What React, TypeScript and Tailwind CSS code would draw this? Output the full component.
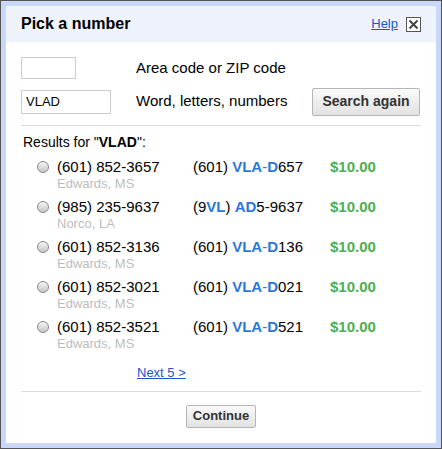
import React from "react";

const results = [
  { phone: "(601) 852-3657", place: "Edwards, MS", vanity: [["(601) ", false], ["VLA", true], ["-", "dash"], ["D", true], ["657", false]] },
  { phone: "(985) 235-9637", place: "Norco, LA", vanity: [["(9", false], ["VL", true], [") ", false], ["AD", true], ["5-9637", false]] },
  { phone: "(601) 852-3136", place: "Edwards, MS", vanity: [["(601) ", false], ["VLA", true], ["-", "dash"], ["D", true], ["136", false]] },
  { phone: "(601) 852-3021", place: "Edwards, MS", vanity: [["(601) ", false], ["VLA", true], ["-", "dash"], ["D", true], ["021", false]] },
  { phone: "(601) 852-3521", place: "Edwards, MS", vanity: [["(601) ", false], ["VLA", true], ["-", "dash"], ["D", true], ["521", false]] },
] as const;

const Radio = () => (
  <span className="mt-[3px] block h-[12px] w-[12px] shrink-0 rounded-full border border-[#8a8a8a] bg-gradient-to-b from-[#f4f4f4] to-[#c8c8c8]" />
);

const GrayButton = ({ children, className }: { children: React.ReactNode; className: string }) => (
  <button className={`rounded-[2px] border border-[#b5b5b5] bg-gradient-to-b from-[#fafafa] to-[#e2e2e2] font-bold text-[#333] ${className}`}>
    {children}
  </button>
);

export default function App() {
  return (
    <div className="h-[449px] w-[442px] border border-[#555] bg-[#c9d7fa] p-[5px] font-['Liberation_Sans',Arial,sans-serif]">
      <div className="flex h-full flex-col bg-white">
        {/* header */}
        <div className="flex h-[36px] items-center bg-[#eef2fb] pl-[15px] pr-[15px]">
          <span className="text-[16px] font-bold text-black">Pick a number</span>
          <a href="#" className="ml-auto mr-[8px] text-[13px] text-[#1a55cc] underline">
            Help
          </a>
          <span className="flex h-[15px] w-[15px] items-center justify-center border border-[#555] bg-white">
            <svg width="11" height="11" viewBox="0 0 11 11">
              <path d="M1.5 1.5 L9.5 9.5 M9.5 1.5 L1.5 9.5" stroke="#444" strokeWidth="2" />
            </svg>
          </span>
        </div>

        <div className="flex flex-col px-[15px]">
          {/* search form */}
          <div className="mt-[15px] grid grid-cols-[115px_1fr_auto] items-center gap-y-[8px] text-[15px] text-black">
            <input className="h-[22px] w-[55px] border border-[#ccc] px-[4px] outline-none" />
            <span>Area code or ZIP code</span>
            <span />
            <input
              defaultValue="VLAD"
              className="h-[24px] w-[90px] border border-[#ccc] px-[4px] text-[13px] outline-none"
            />
            <span>Word, letters, numbers</span>
            <GrayButton className="mr-px h-[28px] w-[108px] text-[14px]">Search again</GrayButton>
          </div>

          <div className="mt-[9px] h-px bg-[#dcdcdc]" />

          <div className="mt-[8px] pl-[2px] text-[14px] leading-[16px] text-black">
            Results for "<b>VLAD</b>":
          </div>

          <div className="mt-[8px] flex flex-col gap-[7px]">
            {results.map((r, i) => (
              <div key={i} className="flex pl-[16px]">
                <Radio />
                <div className="ml-[8px] w-[136px]">
                  <div className="text-[15px] leading-[18px] text-black">{r.phone}</div>
                  <div className="text-[13px] leading-[15px] text-[#bdbdbd]">{r.place}</div>
                </div>
                <div className="w-[137px] text-[15px] leading-[18px] text-black">
                  {r.vanity.map(([t, b], j) =>
                    b === true ? (
                      <b key={j} className="text-[#2b78d8]">{t}</b>
                    ) : b === "dash" ? (
                      <span key={j} className="text-[#2b78d8]">{t}</span>
                    ) : (
                      <span key={j}>{t}</span>
                    )
                  )}
                </div>
                <div className="text-[15px] font-bold leading-[18px] text-[#4fae4f]">$10.00</div>
              </div>
            ))}
          </div>

          <a href="#" className="ml-[116px] mt-[14px] text-[13px] leading-[16px] text-[#1a55cc] underline">
            Next 5 &gt;
          </a>

          <div className="mt-[10px] h-px bg-[#dcdcdc]" />

          <div className="mt-[13px] flex justify-center">
            <GrayButton className="h-[23px] w-[70px] text-[13px]">Continue</GrayButton>
          </div>
        </div>
      </div>
    </div>
  );
}
